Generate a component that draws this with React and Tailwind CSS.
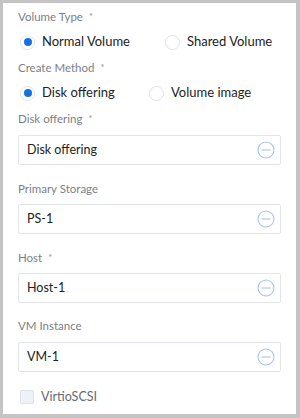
import React, { useState } from 'react'

const font = { fontFamily: 'Lato, "Liberation Sans", sans-serif' }

const Label = ({ children, required, className = '' }) => (
    <div className={`h-[18px] flex items-center text-[11.5px] text-[#7a7f87] ${className}`}>
        {children}
        {required && <span className="ml-[6px] text-[9px] text-[#8a8f97]">*</span>}
    </div>
)

const Radio = ({ checked, label, onClick, className = '' }) => (
    <div className={`flex items-center gap-[7px] cursor-pointer ${className}`} onClick={onClick}>
        <span className="w-[15px] h-[15px] rounded-full border border-[#dfe3ea] bg-white flex items-center justify-center">
            {checked && <span className="w-[8px] h-[8px] rounded-full bg-[#1470de]" />}
        </span>
        <span className="text-[13px] text-[#222]">{label}</span>
    </div>
)

const SelectBox = ({ value, className = '' }) => (
    <div className={`h-[30px] border border-[#e1e5ea] rounded-[2px] flex items-center justify-between pl-[8px] pr-[5px] ${className}`}>
        <span className="text-[12.5px] text-[#222]">{value}</span>
        <svg width="18" height="18" viewBox="0 0 18 18" fill="none">
            <circle cx="9" cy="9" r="8" stroke="#a9c3ea" strokeWidth="1.1" />
            <line x1="4.5" y1="9" x2="13.5" y2="9" stroke="#a9c3ea" strokeWidth="1.1" />
        </svg>
    </div>
)

export default function App() {
    const [volumeType, setVolumeType] = useState('normal')
    const [method, setMethod] = useState('disk')

    return (
        <div className="w-[300px] h-[418px] bg-[#c4c4c4] pt-[3px] pl-[3px] pr-[4px] pb-[4px]" style={font}>
            <div className="h-full bg-white pl-[15px] pr-[15px] pt-[5px] flex flex-col">
                <Label required>Volume Type</Label>
                <div className="h-[20px] mt-[6px] flex items-center pl-[2px]">
                    <Radio checked={volumeType === 'normal'} label="Normal Volume" onClick={() => setVolumeType('normal')} className="w-[145px]" />
                    <Radio checked={volumeType === 'shared'} label="Shared Volume" onClick={() => setVolumeType('shared')} />
                </div>

                <Label required className="mt-[7px]">Create Method</Label>
                <div className="h-[20px] mt-[6px] flex items-center pl-[2px]">
                    <Radio checked={method === 'disk'} label="Disk offering" onClick={() => setMethod('disk')} className="w-[129px]" />
                    <Radio checked={method === 'image'} label="Volume image" onClick={() => setMethod('image')} />
                </div>

                <Label required className="mt-[7px]">Disk offering</Label>
                <SelectBox value="Disk offering" className="mt-[7px]" />

                <Label className="mt-[15px]">Primary Storage</Label>
                <SelectBox value="PS-1" className="mt-[6px]" />

                <Label required className="mt-[15px]">Host</Label>
                <SelectBox value="Host-1" className="mt-[6px]" />

                <Label className="mt-[14px]">VM Instance</Label>
                <SelectBox value="VM-1" className="mt-[7px]" />

                <div className="h-[20px] mt-[15px] flex items-center gap-[7px] pl-[2px]">
                    <span className="w-[14px] h-[14px] rounded-[2px] border border-[#dde2ea] bg-[#eef1f6]" />
                    <span className="text-[12.5px] text-[#666b73]">VirtioSCSI</span>
                </div>
            </div>
        </div>
    )
}
